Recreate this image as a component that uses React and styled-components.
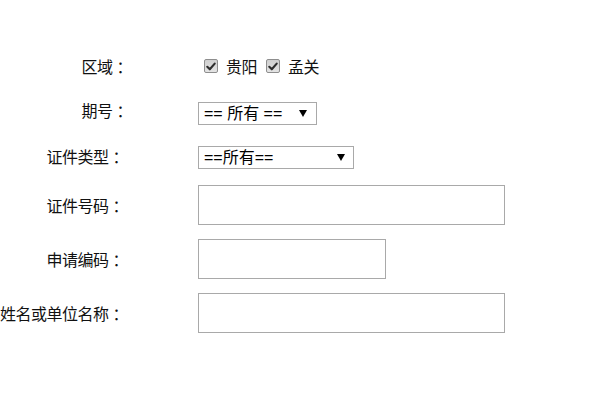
import React from "react";
import styled, { createGlobalStyle } from "styled-components";

const GlobalStyle = createGlobalStyle`
  html, body {
    margin: 0;
    padding: 0;
    background: #ffffff;
  }
  body {
    font-family: "Noto Sans CJK SC", "Liberation Sans", sans-serif;
    font-size: 15px;
    color: #000;
  }
`;

const Form = styled.form`
  display: flex;
  flex-direction: column;
  padding-top: 44px;
  width: 600px;
`;

const Row = styled.div`
  display: flex;
  align-items: center;
  height: ${(p) => p.$h}px;
`;

const Label = styled.div`
  flex: 0 0 auto;
  width: 128px;
  box-sizing: border-box;
  padding-right: ${(p) => (p.$near ? 0 : 4)}px;
  text-align: right;
  white-space: nowrap;
  font-family: "Noto Sans CJK SC", sans-serif;
  font-size: 16px;
  letter-spacing: -0.5px;
  line-height: 20px;
  color: #111;
`;

const Colon = styled.span`
  margin-left: 4px;
  margin-right: -4px;
`;

const Field = styled.div`
  margin-left: 70px;
  display: flex;
  align-items: center;
  margin-top: ${(p) => p.$dy || 0}px;
`;

const CheckGroup = styled.div`
  display: flex;
  align-items: center;
  margin-left: 6px;
`;

const CheckItem = styled.label`
  display: flex;
  align-items: center;
  margin-right: 9px;
  font-family: "Noto Sans CJK SC", sans-serif;
  font-size: 16px;
  letter-spacing: -0.5px;
  line-height: 20px;
  color: #111;
`;

const Box = styled.span`
  display: inline-flex;
  align-items: center;
  justify-content: center;
  width: 14px;
  height: 14px;
  box-sizing: border-box;
  border: 1px solid #8e8e8e;
  border-radius: 2px;
  background: linear-gradient(#cfcfcf, #e4e4e4);
  margin-right: 8px;
`;

const SelectWrap = styled.div`
  position: relative;
  display: inline-block;
`;

const Select = styled.select`
  appearance: none;
  -webkit-appearance: none;
  box-sizing: border-box;
  width: ${(p) => p.$w}px;
  height: 23px;
  border: 1px solid #a9a9a9;
  border-radius: 0;
  background: #fff;
  padding: 0 0 0 5px;
  margin: 0;
  font-family: "Liberation Sans", "Noto Sans CJK SC", sans-serif;
  font-size: 16px;
  color: #000;
  outline: none;
`;

const Arrow = styled.span`
  position: absolute;
  top: 8px;
  right: ${(p) => p.$r}px;
  width: 0;
  height: 0;
  border-left: 4px solid transparent;
  border-right: 4px solid transparent;
  border-top: 7px solid #000;
  pointer-events: none;
`;

const TextInput = styled.input`
  box-sizing: border-box;
  width: ${(p) => p.$w}px;
  height: 40px;
  border: 1px solid #a9a9a9;
  border-radius: 0;
  margin: 0;
  padding: 0 6px;
  font-family: "Liberation Sans", "Noto Sans CJK SC", sans-serif;
  font-size: 15px;
  background: #fff;
  outline: none;
`;

const Check = () => (
  <svg width="10" height="9" viewBox="0 0 10 9">
    <path
      d="M1.3 4.8 L3.8 7.3 L8.7 1.6"
      fill="none"
      stroke="#2e2e2e"
      strokeWidth="2.1"
      strokeLinecap="round"
      strokeLinejoin="round"
    />
  </svg>
);

export default function App() {
  return (
    <>
      <GlobalStyle />
      <Form onSubmit={(e) => e.preventDefault()}>
        <Row $h={44}>
          <Label $near>区域<Colon>：</Colon></Label>
          <Field>
            <CheckGroup>
              <CheckItem>
                <Box><Check /></Box>贵阳
              </CheckItem>
              <CheckItem>
                <Box><Check /></Box>孟关
              </CheckItem>
            </CheckGroup>
          </Field>
        </Row>
        <Row $h={44}>
          <Label $near>期号<Colon>：</Colon></Label>
          <Field $dy={6}>
            <SelectWrap>
              <Select $w={119} defaultValue="all">
                <option value="all">== 所有 ==</option>
              </Select>
              <Arrow $r={10} />
            </SelectWrap>
          </Field>
        </Row>
        <Row $h={48}>
          <Label>证件类型<Colon>：</Colon></Label>
          <Field $dy={3}>
            <SelectWrap>
              <Select $w={156} defaultValue="all">
                <option value="all">==所有==</option>
              </Select>
              <Arrow $r={9} />
            </SelectWrap>
          </Field>
        </Row>
        <Row $h={50}>
          <Label>证件号码<Colon>：</Colon></Label>
          <Field>
            <TextInput $w={307} />
          </Field>
        </Row>
        <Row $h={58}>
          <Label>申请编码<Colon>：</Colon></Label>
          <Field>
            <TextInput $w={188} />
          </Field>
        </Row>
        <Row $h={50}>
          <Label>姓名或单位名称<Colon>：</Colon></Label>
          <Field>
            <TextInput $w={307} />
          </Field>
        </Row>
      </Form>
    </>
  );
}
